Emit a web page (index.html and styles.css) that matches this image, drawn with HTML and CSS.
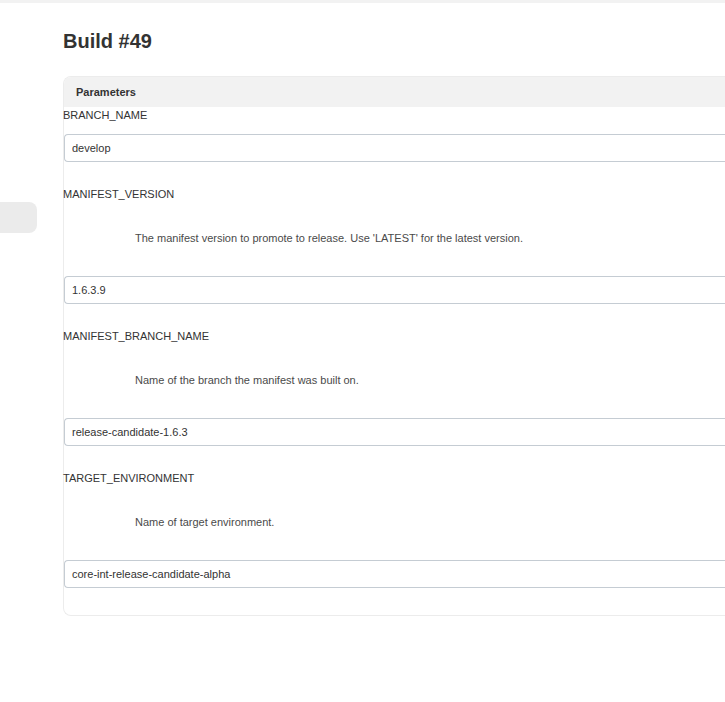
FILE: index.html
```html
<!DOCTYPE html>
<html>
<head>
<meta charset="utf-8">
<link rel="stylesheet" href="styles.css">
</head>
<body>
<div class="topbar"></div>
<div class="layout">
  <aside class="sidebar">
    <div class="side-item"></div>
  </aside>
  <main class="main">
    <h1 class="title">Build #49</h1>
    <section class="panel">
      <div class="panel-head">Parameters</div>
      <div class="param first">
        <div class="label">BRANCH_NAME</div>
        <div class="input">develop</div>
      </div>
      <div class="param">
        <div class="label">MANIFEST_VERSION</div>
        <div class="desc">The manifest version to promote to release. Use 'LATEST' for the latest version.</div>
        <div class="input">1.6.3.9</div>
      </div>
      <div class="param">
        <div class="label">MANIFEST_BRANCH_NAME</div>
        <div class="desc">Name of the branch the manifest was built on.</div>
        <div class="input">release-candidate-1.6.3</div>
      </div>
      <div class="param">
        <div class="label">TARGET_ENVIRONMENT</div>
        <div class="desc">Name of target environment.</div>
        <div class="input">core-int-release-candidate-alpha</div>
      </div>
    </section>
  </main>
</div>
</body>
</html>
```
FILE: styles.css
```css
html, body {
  margin: 0;
  padding: 0;
  background: #fff;
  overflow: hidden;
}
body {
  font-family: "Liberation Sans", Arial, sans-serif;
  color: #333;
  width: 725px;
  height: 702px;
}
.topbar {
  height: 3px;
  background: #f2f2f2;
}
.layout {
  display: flex;
  overflow: hidden;
}
.sidebar {
  width: 63px;
  flex: none;
  padding-top: 199px;
}
.side-item {
  width: 37px;
  height: 31px;
  background: #ebebeb;
  border-radius: 0 8px 8px 0;
}
.main {
  flex: none;
  width: 720px;
}
.title {
  margin: 27px 0 0 0;
  font-size: 20px;
  line-height: 23px;
  font-weight: bold;
  color: #333;
}
.panel {
  margin-top: 23px;
  border: 1px solid #ececec;
  border-right: none;
  border-radius: 8px 0 0 8px;
  padding-bottom: 27px;
}
.panel-head {
  background: #f2f2f2;
  height: 30px;
  line-height: 30px;
  padding-left: 12px;
  font-size: 11px;
  font-weight: bold;
  color: #333;
  border-radius: 7px 0 0 0;
}
.param {
  padding-top: 24px;
}
.param.first {
  padding-top: 0;
}
.label {
  font-size: 11px;
  line-height: 16px;
  color: #333;
  margin-left: -1px;
}
.desc {
  font-size: 11px;
  line-height: 16px;
  color: #4a4a4a;
  margin: 28px 0 0 71px;
}
.input {
  margin-top: 30px;
  height: 26px;
  line-height: 26px;
  border: 1px solid #c5ccd3;
  border-right: none;
  border-radius: 4px 0 0 4px;
  padding-left: 7px;
  font-size: 11px;
  color: #333;
}
.param.first .input {
  margin-top: 11px;
}
```
